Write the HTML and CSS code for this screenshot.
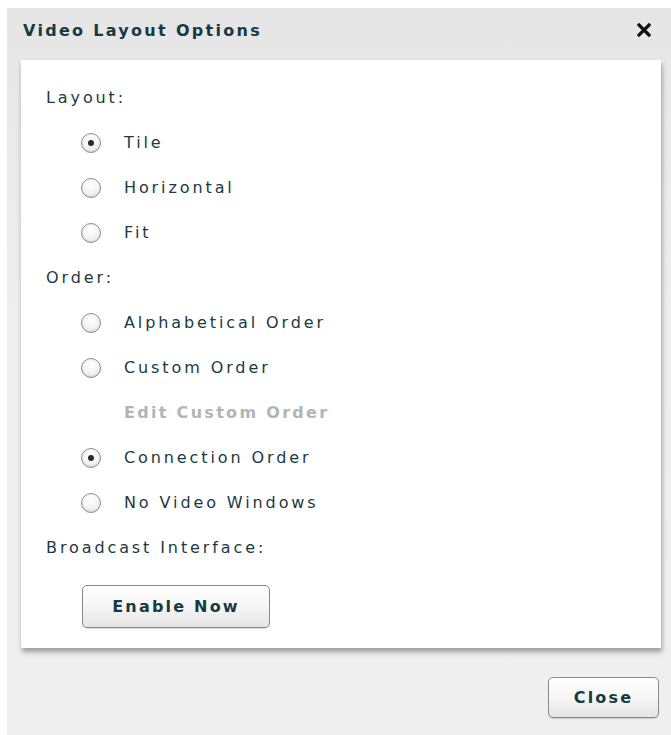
FILE: index.html
```html
<!DOCTYPE html>
<html lang="en">
<head>
<meta charset="utf-8">
<title>Video Layout Options</title>
<link rel="stylesheet" href="styles.css">
</head>
<body>
<div class="dialog">
  <div class="dialog-header">
    <span class="dialog-title">Video Layout Options</span>
    <span class="dialog-x" aria-label="Close">
      <svg width="14" height="14" viewBox="0 0 14 14"><path d="M2 2 L12 12 M12 2 L2 12" stroke="#111" stroke-width="3.2" stroke-linecap="square"/></svg>
    </span>
  </div>
  <div class="dialog-body">
    <div class="row label">Layout:</div>
    <label class="row option"><span class="radio checked"></span><span class="opt-text">Tile</span></label>
    <label class="row option"><span class="radio"></span><span class="opt-text">Horizontal</span></label>
    <label class="row option"><span class="radio"></span><span class="opt-text">Fit</span></label>
    <div class="row label">Order:</div>
    <label class="row option"><span class="radio"></span><span class="opt-text">Alphabetical Order</span></label>
    <label class="row option"><span class="radio"></span><span class="opt-text">Custom Order</span></label>
    <div class="row sublink">Edit Custom Order</div>
    <label class="row option"><span class="radio checked"></span><span class="opt-text">Connection Order</span></label>
    <label class="row option"><span class="radio"></span><span class="opt-text">No Video Windows</span></label>
    <div class="row label">Broadcast Interface:</div>
    <button class="btn btn-enable">Enable Now</button>
  </div>
  <div class="dialog-footer">
    <button class="btn btn-close">Close</button>
  </div>
</div>
</body>
</html>
```
FILE: styles.css
```css
html, body {
  margin: 0;
  padding: 0;
  background: #ffffff;
}

body {
  font-family: "DejaVu Sans", Verdana, sans-serif;
  color: #1b3a41;
}

.dialog {
  margin: 8px 0 0 7px;
  width: 664px;
  height: 727px;
  background: linear-gradient(#e5e5e5 0, #e8e8e8 60px, #eeeeee 300px, #efefef 100%);
  display: flex;
  flex-direction: column;
}

.dialog-header {
  height: 52px;
  display: flex;
  align-items: center;
  justify-content: space-between;
  padding: 0 20px 0 16px;
}

.dialog-title {
  font-weight: bold;
  font-size: 16px;
  letter-spacing: 2.3px;
  color: #173a41;
  margin-top: -8px;
}

.dialog-x {
  display: flex;
  margin-top: -8px;
}

.dialog-body {
  margin: 0 10px 0 14px;
  height: 573px;
  padding: 15px 0 0 25px;
  background: #ffffff;
  box-shadow: 1px 4px 5px rgba(0, 0, 0, 0.35);
  display: flex;
  flex-direction: column;
  align-items: flex-start;
}

.row {
  height: 45px;
  display: flex;
  align-items: center;
  font-size: 16px;
  letter-spacing: 2.9px;
}

.option {
  padding-left: 35px;
}

.radio {
  width: 20px;
  height: 20px;
  box-sizing: border-box;
  border-radius: 50%;
  border: 1px solid #8c8c8c;
  background: radial-gradient(circle at 50% 35%, #ffffff 0, #f4f4f4 50%, #dcdcdc 100%);
  box-shadow: inset 0 -1px 1px rgba(0, 0, 0, 0.08);
  display: flex;
  align-items: center;
  justify-content: center;
  margin-right: 23px;
}

.radio.checked::after {
  content: "";
  width: 6px;
  height: 6px;
  border-radius: 50%;
  background: #1f2f33;
}

.sublink {
  padding-left: 78px;
  font-weight: bold;
  color: #b3b5b5;
  letter-spacing: 2.3px;
}

.btn {
  font-family: "DejaVu Sans", Verdana, sans-serif;
  font-weight: bold;
  font-size: 16px;
  color: #173a41;
  border: 1px solid #8a8a8a;
  border-radius: 5px;
  background: linear-gradient(#ffffff 0, #f6f6f6 50%, #e4e4e4 100%);
  box-shadow: 0 1px 1px rgba(0, 0, 0, 0.15);
  padding: 0;
}

.btn-enable {
  margin: 15px 0 0 36px;
  width: 188px;
  height: 43px;
  letter-spacing: 2.2px;
}

.dialog-footer {
  flex: 1;
  display: flex;
  justify-content: flex-end;
  align-items: flex-start;
  padding: 29px 12px 0 0;
}

.btn-close {
  width: 111px;
  height: 41px;
  letter-spacing: 2.2px;
}
```
